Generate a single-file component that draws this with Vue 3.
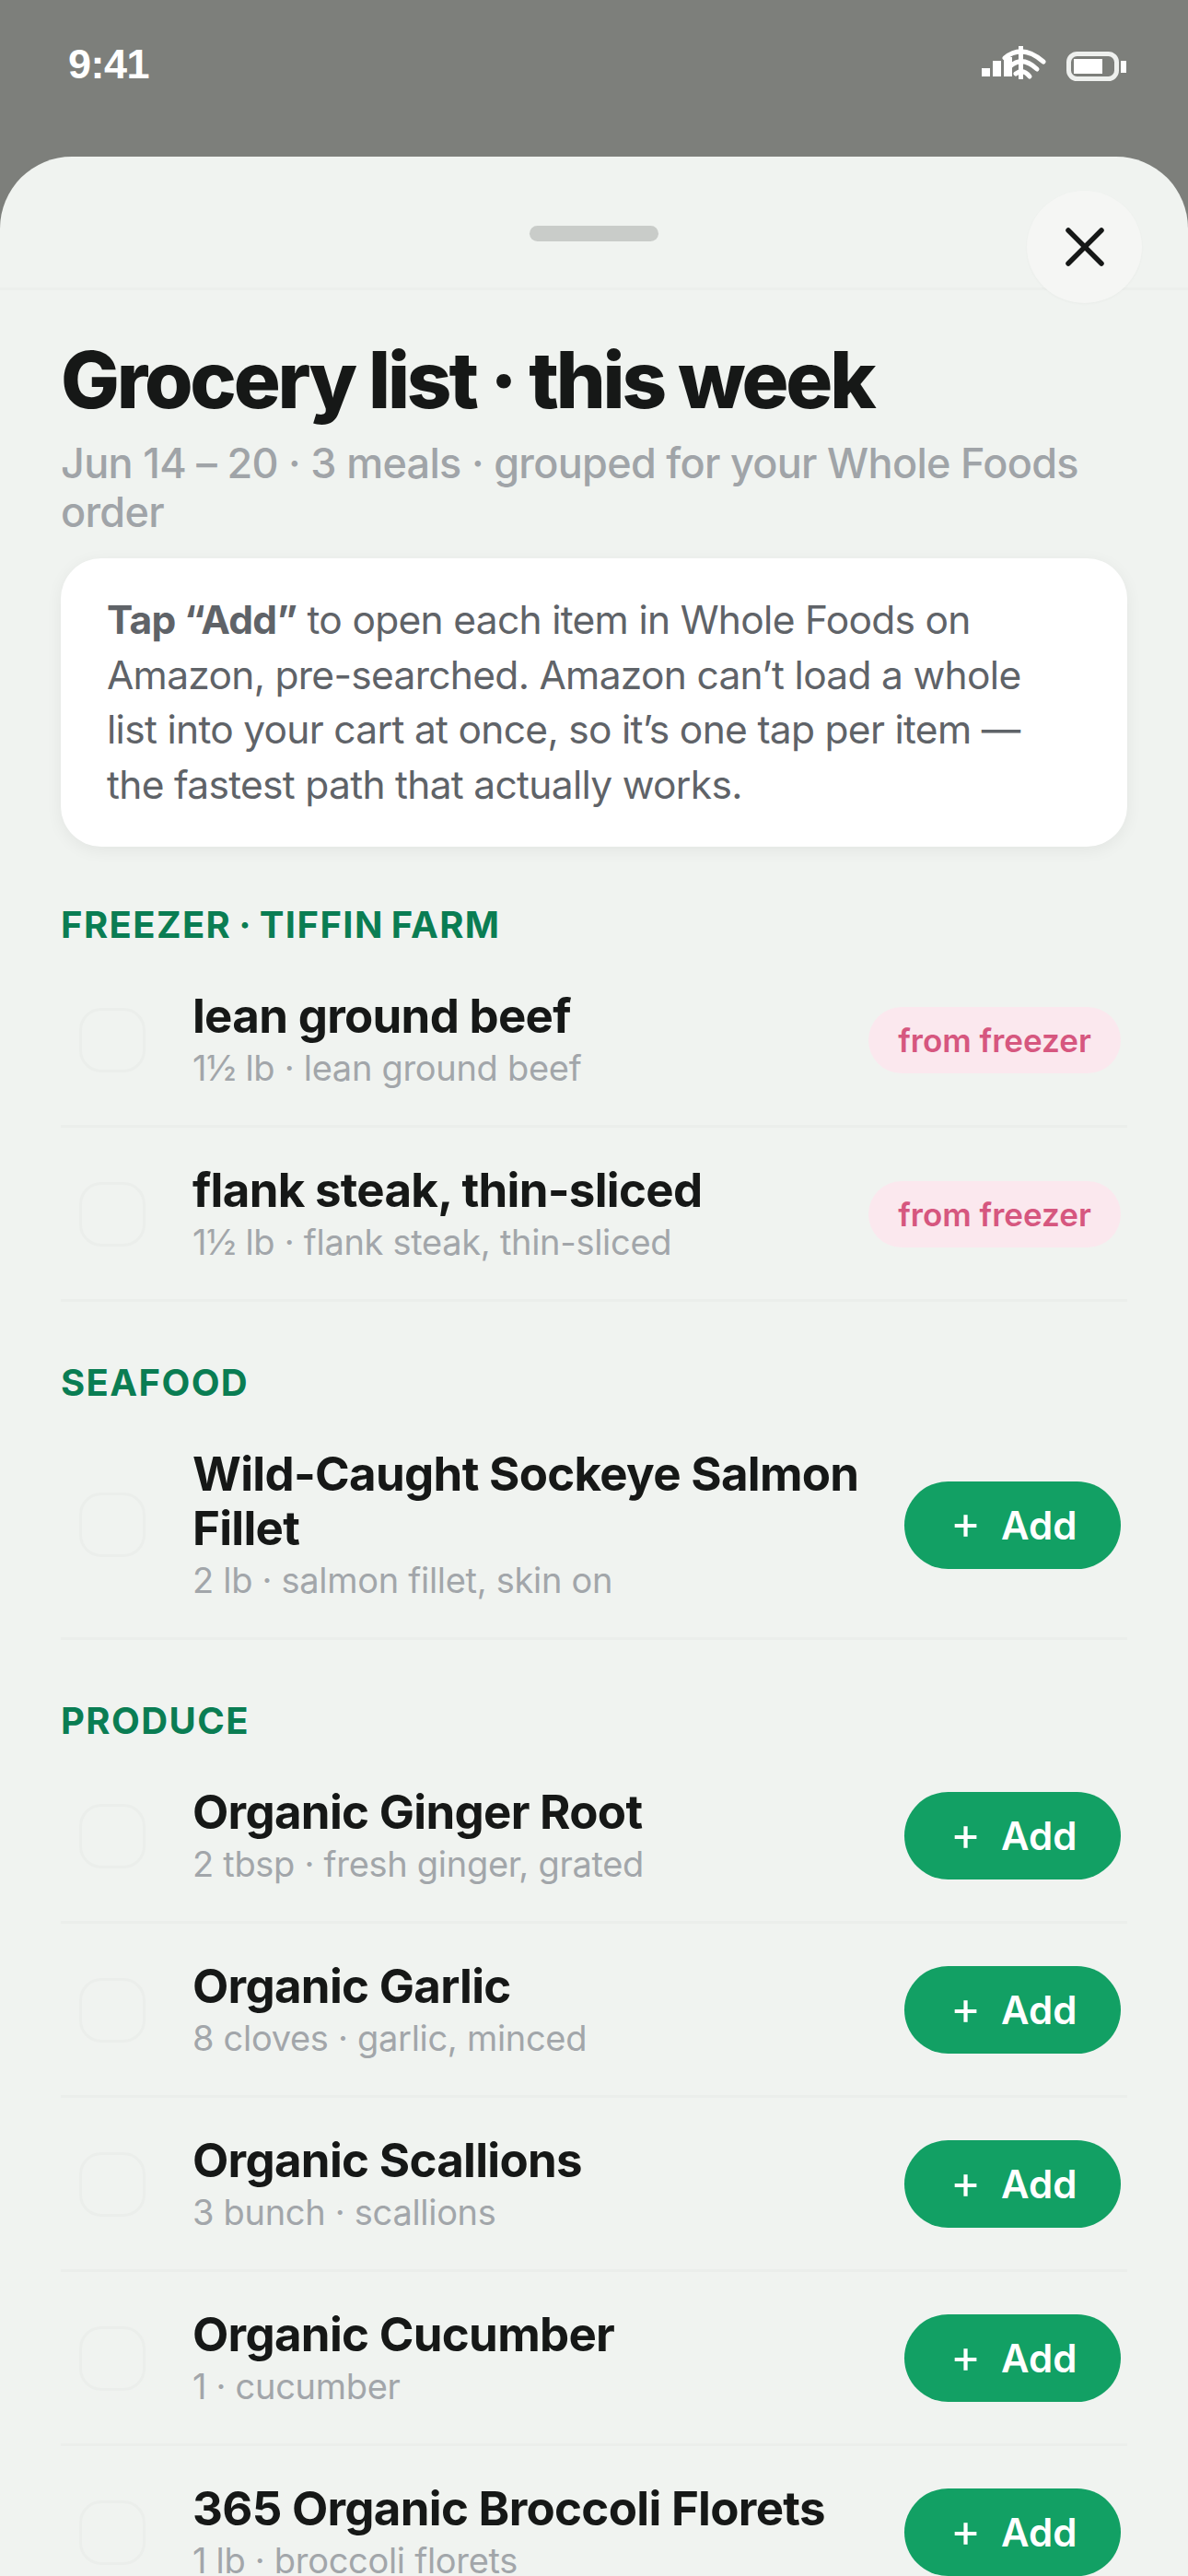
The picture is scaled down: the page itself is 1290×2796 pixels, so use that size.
<script setup>
const sections = [
  {
    title: 'FREEZER · TIFFIN FARM',
    items: [
      { name: 'lean ground beef', sub: '1½ lb · lean ground beef', frozen: true },
      { name: 'flank steak, thin-sliced', sub: '1½ lb · flank steak, thin-sliced', frozen: true },
    ],
  },
  {
    title: 'SEAFOOD',
    items: [{ name: 'Wild-Caught Sockeye Salmon Fillet', sub: '2 lb · salmon fillet, skin on' }],
  },
  {
    title: 'PRODUCE',
    items: [
      { name: 'Organic Ginger Root', sub: '2 tbsp · fresh ginger, grated' },
      { name: 'Organic Garlic', sub: '8 cloves · garlic, minced' },
      { name: 'Organic Scallions', sub: '3 bunch · scallions' },
      { name: 'Organic Cucumber', sub: '1 · cucumber' },
      { name: '365 Organic Broccoli Florets', sub: '1 lb · broccoli florets' },
    ],
  },
]
</script>

<template>
  <div class="screen">
    <header class="status">
      <span class="time">9:41</span>
      <div class="status-icons">
        <svg class="signal" width="72" height="40" viewBox="0 0 72 40" fill="#fff">
          <rect x="0" y="24" width="9" height="9" />
          <rect x="12" y="16" width="9" height="17" />
          <rect x="24" y="12" width="9" height="21" />
          <path d="M40 0h5v36h-5z" />
          <g fill="none" stroke="#fff" stroke-width="5" stroke-linecap="round">
            <path d="M25 13Q44 -3 67 17" />
            <path d="M31 22Q44 10 60 25" />
            <path d="M37 30Q45 24 52 33" />
          </g>
        </svg>
        <svg class="battery" width="66" height="32" viewBox="0 0 66 32">
          <rect x="2.5" y="2.5" width="52" height="27" rx="9" fill="none" stroke="#eef0ee" stroke-width="5" />
          <rect x="8" y="8" width="31" height="16" fill="#fff" />
          <rect x="59" y="10" width="6" height="13" fill="#fff" />
        </svg>
      </div>
    </header>

    <main class="sheet">
      <div class="sheet-top">
        <span class="handle"></span>
        <button class="close" aria-label="Close">
          <svg width="44" height="44" viewBox="0 0 44 44" fill="none" stroke="#161817" stroke-width="5.5" stroke-linecap="round">
            <path d="M4 4l36 36M40 4L4 40" />
          </svg>
        </button>
      </div>

      <div class="body">
        <h1 class="title">Grocery list · this week</h1>
        <p class="subtitle">Jun 14 – 20 · 3 meals · grouped for your Whole Foods order</p>

        <div class="note">
          <strong>Tap “Add”</strong> to open each item in Whole Foods on Amazon, pre-searched. Amazon can’t load a whole list into your cart at once, so it’s one tap per item — the fastest path that actually works.
        </div>

        <section v-for="section in sections" :key="section.title" class="section">
          <h2 class="section-title">{{ section.title }}</h2>
          <div v-for="item in section.items" :key="item.name" class="row">
            <span class="check"></span>
            <div class="info">
              <div class="name">{{ item.name }}</div>
              <div class="sub">{{ item.sub }}</div>
            </div>
            <span v-if="item.frozen" class="chip">from freezer</span>
            <button v-else class="add"><span class="plus">+</span>Add</button>
          </div>
        </section>
      </div>
    </main>
  </div>
</template>

<style>
html, body { margin: 0; background: #7d7f7b; }
</style>

<style scoped>
.screen {
  width: 1290px;
  height: 2796px;
  overflow: hidden;
  background: #7d7f7b;
  font-family: Inter, "Noto Sans", sans-serif;
}
.status {
  height: 170px;
  box-sizing: border-box;
  padding: 0 66px 0 74px;
  display: flex;
  justify-content: space-between;
  align-items: flex-start;
}
.time {
  margin-top: 44px;
  font: 700 45px/52px "Liberation Sans", sans-serif;
  letter-spacing: -0.5px;
  color: #fff;
}
.status-icons {
  display: flex;
  align-items: flex-start;
  gap: 20px;
  margin-top: 50px;
}
.battery { margin-top: 6px; }
.sheet {
  position: relative;
  height: 2626px;
  background: #f0f3f0;
  border-radius: 78px 78px 0 0;
}
.sheet-top {
  height: 145px;
  box-sizing: border-box;
  border-bottom: 3px solid #ecefec;
  display: flex;
  justify-content: center;
  padding-top: 75px;
}
.handle {
  width: 140px;
  height: 17px;
  border-radius: 9px;
  background: #c9ccc9;
}
.close {
  position: absolute;
  top: 37px;
  right: 50px;
  width: 125px;
  height: 122px;
  border: 0;
  padding: 0;
  border-radius: 50%;
  background: #f5f6f4;
  box-shadow: 0 1px 3px rgba(0, 0, 0, 0.03);
  display: flex;
  align-items: center;
  justify-content: center;
}
.body { padding: 0 66px; }
.title {
  margin: 50px 0 0;
  font-size: 85px;
  line-height: 96px;
  font-weight: 800;
  letter-spacing: -3.2px;
  color: #161817;
}
.subtitle {
  margin: 15px 0 0;
  font-size: 45px;
  line-height: 53px;
  font-weight: 500;
  letter-spacing: -0.7px;
  color: #a0a4a8;
}
.note {
  margin-top: 24px;
  box-sizing: border-box;
  height: 313px;
  padding: 37px 80px 0 50px;
  background: #fff;
  border-radius: 44px;
  box-shadow: 0 4px 18px rgba(0, 0, 0, 0.06);
  font-size: 42.5px;
  line-height: 59.5px;
  letter-spacing: -0.7px;
  color: #5f6368;
}
.note strong { font-weight: 700; }
.section { margin-top: 57px; }
.section:first-of-type { margin-top: 54px; }
.section-title {
  margin: 0;
  font-size: 40px;
  line-height: 62px;
  font-weight: 700;
  letter-spacing: 1.4px;
  word-spacing: -3px;
  color: #0a7d53;
}
.row {
  display: flex;
  align-items: center;
  box-sizing: border-box;
  min-height: 189px;
  padding: 38px 7px 37px 20px;
  border-bottom: 3px solid #ebeeeb;
}
.check {
  flex: none;
  width: 72px;
  height: 70px;
  box-sizing: border-box;
  border: 3px solid #ebeeeb;
  border-radius: 24px;
  margin-right: 51px;
}
.info { flex: 1; min-width: 0; }
.name {
  font-size: 51px;
  line-height: 59px;
  font-weight: 700;
  letter-spacing: -0.7px;
  color: #161817;
}
.sub {
  margin-top: 2px;
  font-size: 38px;
  line-height: 50px;
  letter-spacing: -0.3px;
  color: #a2a6aa;
}
.chip {
  flex: none;
  width: 274px;
  height: 72px;
  border-radius: 36px;
  background: #fbe8ee;
  color: #d6577f;
  font-size: 35px;
  line-height: 72px;
  font-weight: 600;
  text-align: center;
}
.add {
  flex: none;
  width: 235px;
  height: 95px;
  border: 0;
  padding: 0 0 0 50px;
  border-radius: 48px;
  background: #12a064;
  color: #fff;
  font-family: inherit;
  font-size: 42px;
  font-weight: 600;
  display: flex;
  align-items: center;
  justify-content: flex-start;
}
.plus {
  margin-right: 22px;
  font-size: 50px;
  font-weight: 400;
  position: relative;
  top: -3px;
}
</style>
